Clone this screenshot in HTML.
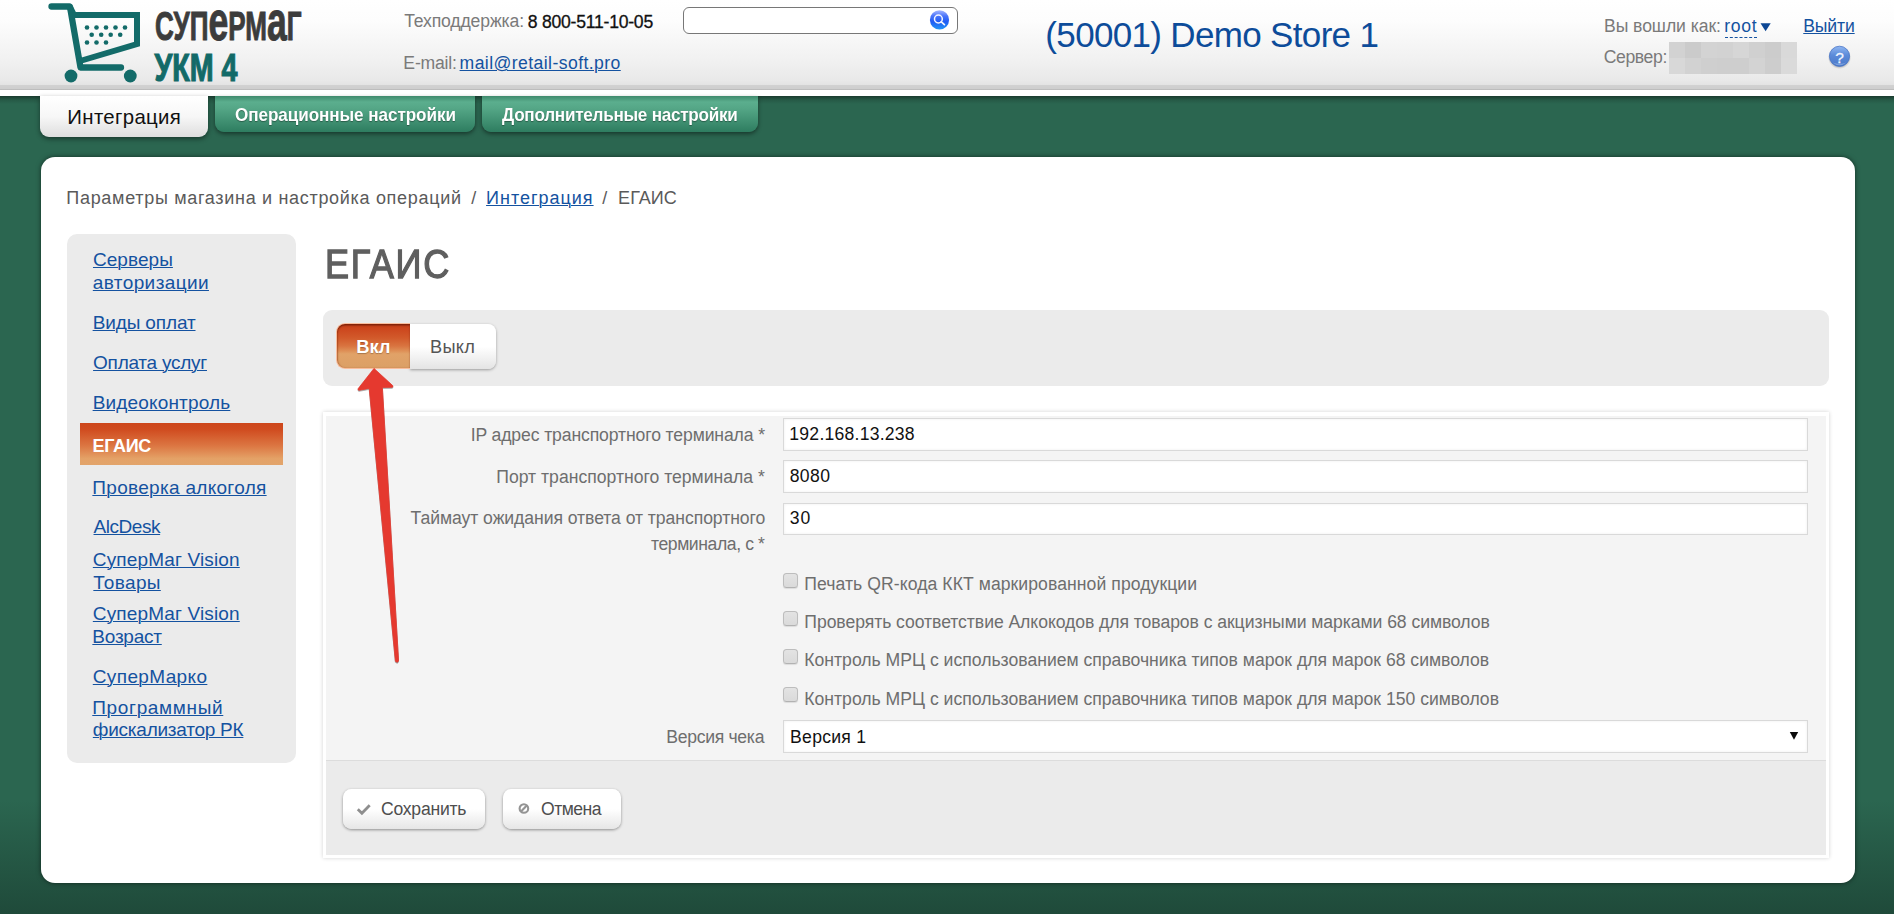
<!DOCTYPE html>
<html lang="ru">
<head>
<meta charset="utf-8">
<title>ЕГАИС — СуперМаг УКМ 4</title>
<style>
html,body{margin:0;padding:0}
body{width:1894px;height:914px;overflow:hidden;position:relative;font-family:"Liberation Sans",Arial,sans-serif;
  background:#2b6650 linear-gradient(to bottom,#2b6650 0,#2b6650 800px,#1f4a3a 914px);}
.abs{position:absolute}
.t{position:absolute;margin:0;white-space:nowrap;line-height:1;text-decoration:none;font-weight:400}
a.u{text-decoration:underline;text-decoration-thickness:1.3px;text-underline-offset:0.9px}
a.dash{text-decoration:none}
#hdr{left:0;top:0;width:1894px;height:96px;background:linear-gradient(to bottom,#ffffff 0,#fdfdfd 20px,#f1f1f1 60px,#e9e9e9 80px,#e3e3e3 85px,#d1d1d1 85.5px,#cecece 88.5px,#bcbcbc 89px,#bdbdbd 90px,#ffffff 90.5px,#ffffff 96px)}
#topshade{left:0;top:96px;width:1894px;height:8px;background:linear-gradient(to bottom,rgba(0,0,0,.42),rgba(0,0,0,.12) 50%,rgba(0,0,0,0))}
.tab{top:96px;height:36px;border-radius:0 0 9px 9px;background:linear-gradient(to bottom,#3f8a6d 0,#5bae8e 6px,#55a787 12px,#2e7d60 100%);box-shadow:0 2px 4px rgba(0,0,0,.45)}
#tab1{left:40px;top:95.5px;width:168px;height:41.5px;border-radius:0 0 9px 9px;background:linear-gradient(to bottom,#ffffff 0,#f7f7f7 50%,#dedede 100%);box-shadow:0 2px 5px rgba(0,0,0,.45)}
#panel{left:41px;top:157px;width:1814px;height:726px;background:#fff;border-radius:14px;box-shadow:0 0 5px rgba(0,0,0,.55)}
#side{left:67px;top:234px;width:229px;height:528.5px;background:#ebebeb;border-radius:10px}
#act{left:80px;top:423px;width:203px;height:41.5px;background:linear-gradient(to bottom,#cd461b 0,#d04b1f 15%,#dc7743 55%,#e4a267 85%,#e2a46b 100%)}
#tog{left:323px;top:310px;width:1506px;height:75.5px;background:#ebebeb;border-radius:9px}
#on{left:336.4px;top:323px;width:73.6px;height:46px;box-sizing:border-box;border:1px solid #f9bd9d;border-right:0;border-radius:9px 0 0 9px;background:linear-gradient(to bottom,#c4401b 0,#cc461d 10%,#d25a2b 32%,#d97440 50%,#de8f56 61%,#e1a268 68%,#dba066 100%);box-shadow:inset 0 1.5px 1.5px rgba(100,20,0,.7),inset 1px 0 1.5px rgba(140,50,0,.35)}
#off{left:410px;top:324px;width:85.6px;height:44.5px;border-radius:0 8px 8px 0;background:linear-gradient(to bottom,#ffffff 0,#ffffff 50%,#e4e4e4 100%);box-shadow:0 1px 3px rgba(0,0,0,.35)}
#form{left:323px;top:412px;width:1506px;height:446px;background:#fff;box-shadow:0 0 4px rgba(0,0,0,.18)}
#formin{left:326.3px;top:415.8px;width:1499.4px;height:344.6px;background:#f4f4f4}
#formft{left:326.3px;top:760.4px;width:1499.4px;height:94.2px;background:#ebebeb;border-top:1px solid #dcdcdc;box-sizing:border-box}
.inp{left:783px;width:1025px;height:32px;box-sizing:border-box;background:#fff;border:1px solid #d9d9d9;box-shadow:inset 0 0 3px rgba(0,0,0,.07)}
.cb{left:783px;width:14.6px;height:14.6px;box-sizing:border-box;border:1px solid #bdbdbd;border-bottom-color:#b2b2b2;border-radius:3.5px;background:linear-gradient(to bottom,#e3e3e3,#dadada);box-shadow:0 1px 1px rgba(0,0,0,.1)}
.btn{top:788.6px;height:40.4px;border-radius:8.5px;background:linear-gradient(to bottom,#ffffff 0,#ffffff 50%,#e6e6e6 100%);box-shadow:0 1px 3px rgba(0,0,0,.4)}
#search{left:683px;top:7px;width:275px;height:27px;box-sizing:border-box;border:1px solid #777;border-radius:6px;background:#fff}
.blk{position:absolute;width:16px;height:16px}
</style>
</head>
<body>
<div id="hdr" class="abs"></div>
<div id="topshade" class="abs"></div>

<!-- logo -->
<svg class="abs" style="left:40px;top:0" width="300" height="90" viewBox="40 0 300 90">
  <g fill="none" stroke="#136b69" stroke-linejoin="round" stroke-linecap="round">
    <path d="M51.5 6.5 H69.5 L73.5 14.5" stroke-width="6.3"/>
    <path d="M70 7 L80.5 67.5 H121" stroke-width="6.3"/>
    <path d="M75 15 H137 V44 L80 61" stroke-width="6" stroke-linejoin="miter"/>
  </g>
  <g fill="#136b69">
    <circle cx="71" cy="76" r="6.4"/><circle cx="130.3" cy="76" r="6.4"/>
    <circle cx="87" cy="27.5" r="2.3"/><circle cx="96.5" cy="27.5" r="2.3"/><circle cx="106" cy="27.5" r="2.3"/><circle cx="115.5" cy="27.5" r="2.3"/><circle cx="125" cy="27.5" r="2.3"/>
    <circle cx="91.7" cy="34.7" r="2.3"/><circle cx="101.2" cy="34.7" r="2.3"/><circle cx="110.7" cy="34.7" r="2.3"/><circle cx="120.2" cy="34.7" r="2.3"/>
    <circle cx="87" cy="42.5" r="2.3"/><circle cx="96.5" cy="42.5" r="2.3"/><circle cx="106" cy="42.5" r="2.3"/>
  </g>
  <text x="155" y="40.2" font-family="Liberation Sans, Arial, sans-serif" font-weight="700" font-size="41" fill="#3c3c3c" textLength="146.5" lengthAdjust="spacingAndGlyphs" stroke="#3c3c3c" stroke-width="1">СУП<tspan font-size="56">е</tspan>РМ<tspan font-size="56">а</tspan>Г</text>
  <text x="154.5" y="81.4" font-family="Liberation Sans, Arial, sans-serif" font-weight="700" font-size="39.6" fill="#126a68" textLength="83" lengthAdjust="spacingAndGlyphs" stroke="#126a68" stroke-width="1.2">УКМ 4</text>
</svg>

<!-- search -->
<div id="search" class="abs"></div>
<svg class="abs" style="left:929px;top:9px" width="22" height="22" viewBox="0 0 22 22">
  <defs><linearGradient id="sg" x1="0" y1="0" x2="0" y2="1"><stop offset="0" stop-color="#a4b6ff"/><stop offset=".3" stop-color="#4a74fa"/><stop offset=".6" stop-color="#1f5cf4"/><stop offset="1" stop-color="#2196f6"/></linearGradient></defs>
  <circle cx="10.5" cy="10.9" r="9.6" fill="url(#sg)"/>
  <circle cx="9.4" cy="10" r="3.9" fill="none" stroke="#f4f7ff" stroke-width="1.5"/>
  <path d="M12.3 12.9 L15.4 15.7" stroke="#f4f7ff" stroke-width="1.7" stroke-linecap="round"/>
</svg>

<!-- user block -->
<div class="abs" style="left:1725px;top:37px;width:32px;height:0;border-top:1px dashed #1452a0"></div>
<svg class="abs" style="left:1760px;top:23px" width="12" height="9" viewBox="0 0 12 9"><path d="M0.5 0.3 H10.7 L5.6 8.3 Z" fill="#0d4795"/></svg>
<div class="abs" id="blur" style="left:1669px;top:42px;width:128px;height:32px;background:#d6d6d6">
  <i class="blk" style="left:0;top:0;background:#d2d2d2"></i><i class="blk" style="left:16px;top:0;background:#cbcbcb"></i><i class="blk" style="left:32px;top:0;background:#d3d3d3"></i><i class="blk" style="left:48px;top:0;background:#d2d2d2"></i><i class="blk" style="left:64px;top:0;background:#d6d6d6"></i><i class="blk" style="left:80px;top:0;background:#d0d0d0"></i><i class="blk" style="left:96px;top:0;background:#cccccc"></i><i class="blk" style="left:112px;top:0;background:#d9d9d9"></i>
  <i class="blk" style="left:0;top:16px;background:#d8d8d8"></i><i class="blk" style="left:16px;top:16px;background:#d2d2d2"></i><i class="blk" style="left:32px;top:16px;background:#cfcfcf"></i><i class="blk" style="left:48px;top:16px;background:#cecece"></i><i class="blk" style="left:64px;top:16px;background:#cecece"></i><i class="blk" style="left:80px;top:16px;background:#d3d3d3"></i><i class="blk" style="left:96px;top:16px;background:#cdcdcd"></i><i class="blk" style="left:112px;top:16px;background:#dadada"></i>
</div>
<svg class="abs" style="left:1827px;top:44px" width="26" height="28" viewBox="0 0 26 28">
  <defs><linearGradient id="hg" x1="0" y1="0" x2="0" y2="1"><stop offset="0" stop-color="#8fb6f2"/><stop offset=".45" stop-color="#5c8bd9"/><stop offset="1" stop-color="#4a78c8"/></linearGradient>
  <radialGradient id="hs" cx="50%" cy="50%" r="50%"><stop offset=".7" stop-color="rgba(0,0,0,.3)"/><stop offset="1" stop-color="rgba(0,0,0,0)"/></radialGradient></defs>
  <ellipse cx="12.5" cy="13.6" rx="11.6" ry="11.4" fill="url(#hs)"/>
  <circle cx="12.5" cy="12.3" r="10.1" fill="url(#hg)" stroke="#4674c6" stroke-width="0.8"/>
  <path d="M5.5 18.5 Q12.5 24 19.5 18.5 Q12.5 21 5.5 18.5Z" fill="#86a9e2" opacity=".8"/>
  <text x="12.5" y="18.6" text-anchor="middle" font-family="Liberation Sans, Arial, sans-serif" font-size="15.5" fill="#f2f6ff" stroke="#f2f6ff" stroke-width="0.3">?</text>
</svg>

<!-- tabs -->
<div id="tab1" class="abs"></div>
<div class="abs tab" style="left:214.8px;width:260.4px"></div>
<div class="abs tab" style="left:482px;width:276.2px"></div>

<!-- main panel -->
<div id="panel" class="abs"></div>
<div id="side" class="abs"></div>
<div id="act" class="abs"></div>
<div id="tog" class="abs"></div>
<div id="off" class="abs"></div>
<div id="on" class="abs"></div>

<div id="form" class="abs"></div>
<div id="formin" class="abs"></div>
<div id="formft" class="abs"></div>
<div class="abs inp" style="top:418px;height:33px"></div>
<div class="abs inp" style="top:460px;height:33px"></div>
<div class="abs inp" style="top:503px;height:32px"></div>
<div class="abs inp" style="top:720px;height:33px"></div>
<svg class="abs" style="left:1789px;top:731px" width="11" height="10" viewBox="0 0 11 10"><path d="M0.8 1 H9.2 L5 8.8 Z" fill="#0a0a0a"/></svg>
<div class="abs cb" style="top:573px"></div>
<div class="abs cb" style="top:611px"></div>
<div class="abs cb" style="top:649.4px"></div>
<div class="abs cb" style="top:687.4px"></div>

<div class="abs btn" style="left:342.8px;width:142.2px"></div>
<div class="abs btn" style="left:502.6px;width:118.4px"></div>
<svg class="abs" style="left:355px;top:802px" width="18" height="15" viewBox="0 0 18 15"><path d="M2.8 7.3 L6.9 11.2 L14.7 3.3" fill="none" stroke="#8e8e8e" stroke-width="2.8"/></svg>
<svg class="abs" style="left:517px;top:802px" width="14" height="14" viewBox="0 0 14 14"><circle cx="6.9" cy="6.5" r="4.3" fill="none" stroke="#949494" stroke-width="2.1"/><path d="M4 9.5 L9.8 3.5" stroke="#949494" stroke-width="2.1"/></svg>

<span class="t" style="left:404.19px;top:13.15px;font-size:17.60px;letter-spacing:-0.140px;color:#7a7a7a;">Техподдержка:</span>
<span class="t" style="left:527.72px;top:13.50px;font-size:17.60px;letter-spacing:-0.238px;color:#111;-webkit-text-stroke:0.3px #111;">8 800-511-10-05</span>
<span class="t" style="left:403.37px;top:54.98px;font-size:17.60px;letter-spacing:-0.200px;color:#7a7a7a;">E-mail:</span>
<a class="t u" href="#" style="left:459.58px;top:54.98px;font-size:17.60px;letter-spacing:0.420px;color:#1452a0;">mail@retail-soft.pro</a>
<span class="t" style="left:1045.35px;top:17.15px;font-size:35.00px;letter-spacing:-0.668px;color:#0d4c9a;">(50001) Demo Store 1</span>
<span class="t" style="left:1603.99px;top:17.60px;font-size:17.60px;letter-spacing:-0.066px;color:#7a7a7a;">Вы вошли как:</span>
<a class="t dash" href="#" style="left:1724.29px;top:17.88px;font-size:17.60px;letter-spacing:0.709px;color:#1452a0;">root</a>
<a class="t u" href="#" style="left:1803.25px;top:17.74px;font-size:17.60px;letter-spacing:-0.138px;color:#1452a0;">Выйти</a>
<span class="t" style="left:1603.67px;top:49.26px;font-size:17.60px;letter-spacing:-0.369px;color:#7a7a7a;">Сервер:</span>
<span class="t" style="left:67.35px;top:106.83px;font-size:20.40px;letter-spacing:0.326px;color:#111;">Интеграция</span>
<span class="t" style="left:234.51px;top:105.06px;font-size:19.00px;letter-spacing:-0.072px;color:#fff;font-weight:700;transform:scaleX(0.900);transform-origin:0 0;text-shadow:0 1px 1px rgba(0,0,0,.35);">Операционные настройки</span>
<span class="t" style="left:502.34px;top:105.34px;font-size:19.00px;letter-spacing:-0.275px;color:#fff;font-weight:700;transform:scaleX(0.900);transform-origin:0 0;text-shadow:0 1px 1px rgba(0,0,0,.35);">Дополнительные настройки</span>
<span class="t" style="left:66.35px;top:188.98px;font-size:18.00px;letter-spacing:0.690px;color:#5a5a5a;">Параметры магазина и настройка операций</span>
<span class="t" style="left:471.14px;top:188.77px;font-size:18.00px;letter-spacing:0.000px;color:#5a5a5a;">/</span>
<a class="t u" href="#" style="left:486.07px;top:188.98px;font-size:18.00px;letter-spacing:0.988px;color:#1452a0;">Интеграция</a>
<span class="t" style="left:602.14px;top:188.77px;font-size:18.00px;letter-spacing:0.000px;color:#5a5a5a;">/</span>
<span class="t" style="left:618.06px;top:188.77px;font-size:18.00px;letter-spacing:0.082px;color:#5a5a5a;">ЕГАИС</span>
<a class="t u" href="#" style="left:92.97px;top:250.34px;font-size:19.00px;letter-spacing:0.058px;color:#1452a0;">Серверы</a>
<a class="t u" href="#" style="left:92.82px;top:272.62px;font-size:19.00px;letter-spacing:0.389px;color:#1452a0;">авторизации</a>
<a class="t u" href="#" style="left:92.64px;top:312.74px;font-size:19.00px;letter-spacing:-0.122px;color:#1452a0;">Виды оплат</a>
<a class="t u" href="#" style="left:93.08px;top:353.48px;font-size:19.00px;letter-spacing:-0.254px;color:#1452a0;">Оплата услуг</a>
<a class="t u" href="#" style="left:92.64px;top:393.48px;font-size:19.00px;letter-spacing:0.170px;color:#1452a0;">Видеоконтроль</a>
<span class="t" style="left:92.56px;top:437.00px;font-size:18.00px;letter-spacing:-0.303px;color:#fff;font-weight:700;">ЕГАИС</span>
<a class="t u" href="#" style="left:92.37px;top:477.52px;font-size:19.00px;letter-spacing:0.299px;color:#1452a0;">Проверка алкоголя</a>
<a class="t u" href="#" style="left:93.51px;top:517.12px;font-size:19.00px;letter-spacing:-0.438px;color:#1452a0;">AlcDesk</a>
<a class="t u" href="#" style="left:92.84px;top:549.74px;font-size:19.00px;letter-spacing:0.138px;color:#1452a0;">СуперМаг Vision</a>
<a class="t u" href="#" style="left:93.33px;top:572.94px;font-size:19.00px;letter-spacing:0.354px;color:#1452a0;">Товары</a>
<a class="t u" href="#" style="left:92.84px;top:603.98px;font-size:19.00px;letter-spacing:0.138px;color:#1452a0;">СуперМаг Vision</a>
<a class="t u" href="#" style="left:92.35px;top:626.98px;font-size:19.00px;letter-spacing:-0.236px;color:#1452a0;">Возраст</a>
<a class="t u" href="#" style="left:92.77px;top:666.88px;font-size:19.00px;letter-spacing:0.368px;color:#1452a0;">СуперМарко</a>
<a class="t u" href="#" style="left:92.27px;top:697.94px;font-size:19.00px;letter-spacing:0.661px;color:#1452a0;">Программный</a>
<a class="t u" href="#" style="left:92.83px;top:720.15px;font-size:19.00px;letter-spacing:-0.247px;color:#1452a0;">фискализатор РК</a>
<h1 class="t" style="left:325.36px;top:243.06px;font-size:41.50px;letter-spacing:2.025px;color:#5f5f5f;transform:scaleX(0.870);transform-origin:0 0;-webkit-text-stroke:1.3px #5f5f5f;">ЕГАИС</h1>
<span class="t" style="left:356.32px;top:337.69px;font-size:18.40px;letter-spacing:-0.082px;color:#fff;font-weight:700;text-shadow:0 1px 1px rgba(0,0,0,.25);">Вкл</span>
<span class="t" style="left:430.00px;top:337.83px;font-size:18.20px;letter-spacing:0.275px;color:#555;">Выкл</span>
<label class="t" style="left:470.71px;top:427.34px;font-size:17.60px;letter-spacing:-0.119px;color:#6e6e6e;">IP адрес транспортного терминала *</label>
<label class="t" style="left:496.25px;top:468.66px;font-size:17.60px;letter-spacing:0.002px;color:#6e6e6e;">Порт транспортного терминала *</label>
<label class="t" style="left:410.61px;top:510.48px;font-size:17.60px;letter-spacing:-0.061px;color:#6e6e6e;">Таймаут ожидания ответа от транспортного</label>
<label class="t" style="left:651.00px;top:536.40px;font-size:17.60px;letter-spacing:-0.413px;color:#6e6e6e;">терминала, с *</label>
<span class="t" style="left:789.33px;top:426.00px;font-size:17.60px;letter-spacing:0.232px;color:#111;">192.168.13.238</span>
<span class="t" style="left:789.66px;top:468.00px;font-size:17.60px;letter-spacing:0.392px;color:#111;">8080</span>
<span class="t" style="left:789.84px;top:510.00px;font-size:17.60px;letter-spacing:0.865px;color:#111;">30</span>
<label class="t" style="left:804.32px;top:576.00px;font-size:17.60px;letter-spacing:0.067px;color:#6e6e6e;">Печать QR-кода ККТ маркированной продукции</label>
<label class="t" style="left:804.33px;top:614.12px;font-size:17.60px;letter-spacing:-0.061px;color:#6e6e6e;">Проверять соответствие Алкокодов для товаров с акцизными марками 68 символов</label>
<label class="t" style="left:804.31px;top:652.40px;font-size:17.60px;letter-spacing:0.001px;color:#6e6e6e;">Контроль МРЦ с использованием справочника типов марок для марок 68 символов</label>
<label class="t" style="left:804.31px;top:690.88px;font-size:17.60px;letter-spacing:0.001px;color:#6e6e6e;">Контроль МРЦ с использованием справочника типов марок для марок 150 символов</label>
<label class="t" style="left:666.31px;top:729.23px;font-size:17.60px;letter-spacing:-0.305px;color:#6e6e6e;">Версия чека</label>
<span class="t" style="left:790.10px;top:729.30px;font-size:17.60px;letter-spacing:0.265px;color:#111;">Версия 1</span>
<span class="t" style="left:380.99px;top:800.60px;font-size:17.60px;letter-spacing:-0.241px;color:#4e4e4e;">Сохранить</span>
<span class="t" style="left:541.09px;top:800.74px;font-size:17.60px;letter-spacing:-0.537px;color:#4e4e4e;">Отмена</span>

<!-- red annotation arrow -->
<svg class="abs" style="left:340px;top:360px" width="80" height="310" viewBox="340 360 80 310">
  <g filter="drop-shadow(0.6px 1px 0.6px rgba(0,0,0,.35))">
  <path d="M374 368.4 L392.7 385.6 Q393.6 387 392 387.3 L382.4 387.4 L398.6 661 Q397.4 663.4 395.4 661.3 L369.2 388.4 L359.2 390.3 Q357.4 390.3 358.2 388.6 Z" fill="#e5392f" stroke="#e5392f" stroke-width="0.8" stroke-linejoin="round"/>
  </g>
</svg>
</body>
</html>
